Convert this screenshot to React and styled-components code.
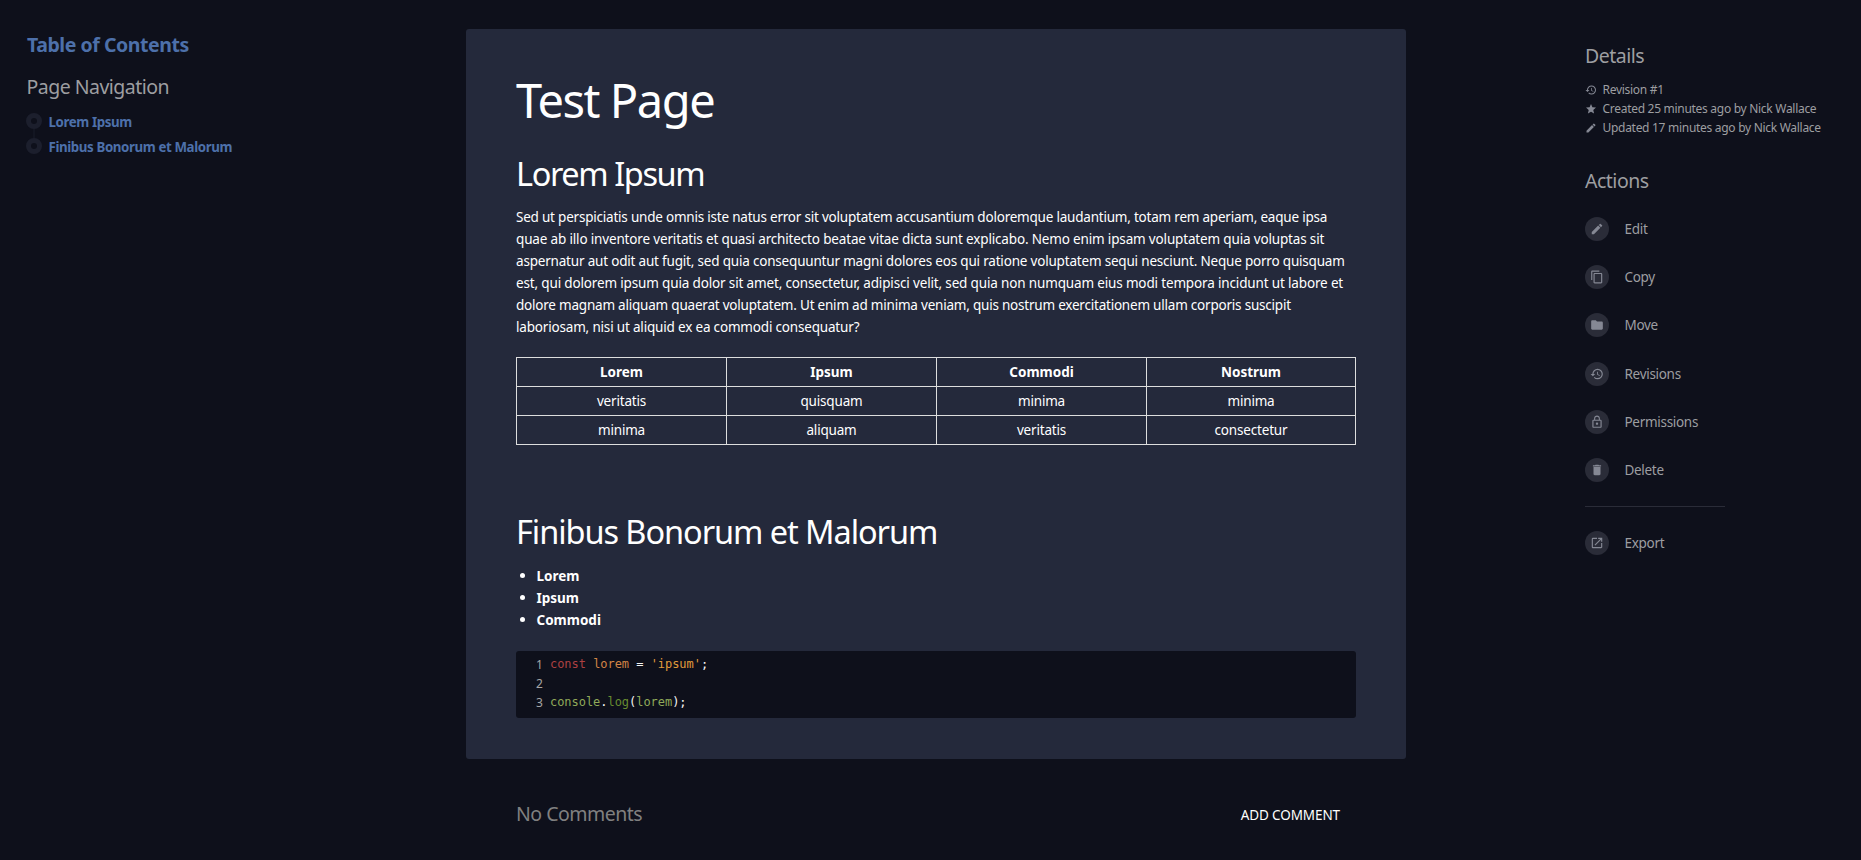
import React from "react";
import styled, { createGlobalStyle, css } from "styled-components";

const colors = {
  page: "#0e101b",
  card: "#24293b",
  text: "#ffffff",
  muted: "#9d9ea1",
  faint: "#808080",
  link: "#4d70aa",
  chip: "#2a2c38",
  icon: "#858894",
  marker: "#1c1f2d",
  border: "#dddddd",
};

const GlobalStyle = createGlobalStyle`
  *, *::before, *::after { box-sizing: border-box; }
  body {
    margin: 0;
    background: ${colors.page};
    color: ${colors.text};
    font-family: "Noto Sans", "Open Sans", sans-serif;
    font-size: 13.5px;
  }
  h1, h2, h3, p, ul { margin: 0; padding: 0; font-weight: 400; }
  ul { list-style: none; }
`;

const Page = styled.div`
  display: grid;
  grid-template-columns: 466px 940px 1fr;
  height: 860px;
  overflow: hidden;
`;

const panelHeading = css`
  font-size: 19.5px;
  line-height: 27px;
  white-space: nowrap;
`;

/* Left column */

const Sidebar = styled.aside`
  padding: 31px 0 0 26px;
`;

const TocHeading = styled.h2`
  ${panelHeading}
  padding-left: 1px;
  color: ${colors.link};
  font-weight: 700;
  letter-spacing: -0.45px;
`;

const NavHeading = styled.h3`
  ${panelHeading}
  margin-top: 15px;
  padding-left: 0.5px;
  color: ${colors.muted};
  letter-spacing: -0.52px;
`;

const NavList = styled.ul`
  display: flex;
  flex-direction: column;
  gap: 1px;
  margin-top: 10px;
`;

const NavItem = styled.li`
  display: flex;
  gap: 6.5px;
  line-height: 24px;
`;

const NavMarker = styled.span`
  position: relative;
  width: 16px;
  height: 16px;
  margin-top: 3px;
  border: 5px solid ${colors.marker};
  border-radius: 50%;

  ${NavItem}:not(:last-child) &::after {
    content: "";
    position: absolute;
    top: 11px;
    left: 2px;
    width: 2px;
    height: 9px;
    background: #131622;
  }
`;

const NavLink = styled.a`
  color: ${colors.link};
  font-size: 13.3px;
  font-weight: 700;
  letter-spacing: -0.39px;
  white-space: nowrap;
`;

/* Centre column */

const Main = styled.main`
  padding-top: 29px;
`;

const Card = styled.article`
  height: 730px;
  padding: 39px 50px 41px;
  border-radius: 3px;
  background: ${colors.card};
`;

const Title = styled.h1`
  font-size: 47px;
  line-height: 64px;
  letter-spacing: -1.45px;
`;

const SectionHeading = styled.h2`
  margin-top: ${(p) => p.$above}px;
  font-size: 32.5px;
  line-height: 45px;
  letter-spacing: ${(p) => p.$track}px;
`;

const Paragraph = styled.p`
  margin-top: 10px;
  line-height: 22px;
`;

const Line = styled.span`
  display: block;
  white-space: nowrap;
  letter-spacing: ${(p) => p.$track}px;
`;

const Table = styled.table`
  width: 840px;
  margin-top: 19px;
  border-collapse: collapse;
  table-layout: fixed;
  text-align: center;
`;

const Cell = styled.td`
  height: 29px;
  padding: 0;
  border: 1px solid ${colors.border};
  line-height: 28px;
  letter-spacing: -0.18px;

  &:nth-child(-n + 3) {
    width: 210px;
  }
`;

const HeadCell = styled(Cell).attrs({ as: "th" })`
  font-weight: 700;
  letter-spacing: 0;
`;

const BulletList = styled.ul`
  margin-top: 11px;
`;

const Bullet = styled.li`
  display: flex;
  align-items: center;
  gap: 11.5px;
  padding-left: 4px;
  font-weight: 700;
  line-height: 22px;

  &::before {
    content: "";
    width: 5px;
    height: 5px;
    margin-bottom: 1px;
    border-radius: 50%;
    background: ${colors.text};
  }
`;

const CodeBlock = styled.div`
  height: 67px;
  margin-top: 20px;
  padding: 4px 0 0 20px;
  border-radius: 3px;
  background: ${colors.page};
`;

const CodeRow = styled.div`
  display: flex;
  height: 19px;
  line-height: 19px;
`;

const LineNumber = styled.span`
  width: 14px;
  color: #a6a6a6;
  font-size: 12px;
`;

const Code = styled.code`
  font-family: "DejaVu Sans Mono", "Liberation Mono", monospace;
  font-size: 12px;
  letter-spacing: -0.04px;
  white-space: pre;
`;

const tokenColors = {
  keyword: "#ac4142",
  def: "#d28445",
  string: "#e09c3c",
  variable: "#90a959",
  property: "#678c30",
  plain: "#f5f5f5",
};

const Token = styled.span`
  color: ${(p) => tokenColors[p.$kind]};
`;

const Comments = styled.section`
  display: flex;
  justify-content: space-between;
  align-items: flex-start;
  padding: 41px 66px 0 50px;
`;

const CommentsHeading = styled.h3`
  ${panelHeading}
  color: ${colors.faint};
  letter-spacing: -0.5px;
`;

const TextButton = styled.button`
  margin: 2px 0 0;
  padding: 0;
  border: 0;
  background: none;
  color: ${colors.text};
  font: inherit;
  line-height: 26px;
  letter-spacing: -0.1px;
  text-transform: uppercase;
`;

/* Right column */

const Meta = styled.aside`
  padding: 42px 0 0 179px;
`;

const MetaHeading = styled.h3`
  ${panelHeading}
  color: ${colors.muted};
  letter-spacing: -0.5px;
`;

const DetailList = styled.ul`
  margin: 11px 0 30px;
`;

const Detail = styled.li`
  display: flex;
  align-items: center;
  gap: 5.5px;
  color: ${colors.muted};
  font-size: 12px;
  line-height: 19px;
  letter-spacing: -0.29px;
  white-space: nowrap;
`;

const ActionList = styled.div`
  display: flex;
  flex-direction: column;
  gap: 24.2px;
  margin-top: 23px;
`;

const Action = styled.a`
  display: flex;
  gap: 15.5px;
  color: ${colors.muted};
  line-height: 24px;
  letter-spacing: -0.3px;
`;

const Chip = styled.span`
  display: flex;
  align-items: center;
  justify-content: center;
  width: 24px;
  height: 24px;
  border-radius: 50%;
  background: ${colors.chip};
`;

const Divider = styled.hr`
  width: 140px;
  height: 1px;
  margin: 0;
  border: 0;
  background: ${colors.chip};
`;

const Svg = styled.svg`
  display: block;
  flex: none;
  width: ${(p) => p.$size}px;
  height: ${(p) => p.$size}px;
  fill: ${colors.icon};
`;

const iconPaths = {
  history:
    "M13 3a9 9 0 0 0-9 9H1l3.89 3.89.07.14L9 12H6c0-3.87 3.13-7 7-7s7 3.13 7 7-3.13 7-7 7c-1.93 0-3.68-.79-4.94-2.06l-1.42 1.42A8.95 8.95 0 0 0 13 21a9 9 0 0 0 0-18zm-1 5v5l4.28 2.54.72-1.21-3.5-2.08V8z",
  star: "M12 17.27L18.18 21l-1.64-7.03L22 9.24l-7.19-.61L12 2 9.19 8.63 2 9.24l5.46 4.73L5.82 21z",
  edit: "M3 17.25V21h3.75L17.81 9.94l-3.75-3.75L3 17.25zM20.71 7.04a1 1 0 0 0 0-1.41l-2.34-2.34a1 1 0 0 0-1.41 0l-1.83 1.83 3.75 3.75 1.83-1.83z",
  copy: "M16 1H4c-1.1 0-2 .9-2 2v14h2V3h12V1zm3 4H8c-1.1 0-2 .9-2 2v14c0 1.1.9 2 2 2h11c1.1 0 2-.9 2-2V7c0-1.1-.9-2-2-2zm0 16H8V7h11v14z",
  folder: "M10 4H4c-1.1 0-1.99.9-1.99 2L2 18c0 1.1.9 2 2 2h16c1.1 0 2-.9 2-2V8c0-1.1-.9-2-2-2h-8l-2-2z",
  lock: "M12 17c1.1 0 2-.9 2-2s-.9-2-2-2-2 .9-2 2 .9 2 2 2zm6-9h-1V6c0-2.76-2.24-5-5-5S7 3.24 7 6v2H6c-1.1 0-2 .9-2 2v10c0 1.1.9 2 2 2h12c1.1 0 2-.9 2-2V10c0-1.1-.9-2-2-2zM8.9 6c0-1.71 1.39-3.1 3.1-3.1s3.1 1.39 3.1 3.1v2H8.9V6zM18 20H6V10h12v10z",
  trash: "M6 19c0 1.1.9 2 2 2h8c1.1 0 2-.9 2-2V7H6v12zM19 4h-3.5l-1-1h-5l-1 1H5v2h14V4z",
  export:
    "M19 19H5V5h7V3H5a2 2 0 0 0-2 2v14a2 2 0 0 0 2 2h14c1.1 0 2-.9 2-2v-7h-2v7zM14 3v2h3.59l-9.83 9.83 1.41 1.41L19 6.41V10h2V3h-7z",
};

function Icon({ name, size }) {
  return (
    <Svg viewBox="0 0 24 24" $size={size} aria-hidden="true">
      <path d={iconPaths[name]} />
    </Svg>
  );
}

const paragraph = [
  ["Sed ut perspiciatis unde omnis iste natus error sit voluptatem accusantium doloremque laudantium, totam rem aperiam, eaque ipsa", -0.213],
  ["quae ab illo inventore veritatis et quasi architecto beatae vitae dicta sunt explicabo. Nemo enim ipsam voluptatem quia voluptas sit", -0.16],
  ["aspernatur aut odit aut fugit, sed quia consequuntur magni dolores eos qui ratione voluptatem sequi nesciunt. Neque porro quisquam", -0.191],
  ["est, qui dolorem ipsum quia dolor sit amet, consectetur, adipisci velit, sed quia non numquam eius modi tempora incidunt ut labore et", -0.153],
  ["dolore magnam aliquam quaerat voluptatem. Ut enim ad minima veniam, quis nostrum exercitationem ullam corporis suscipit", -0.213],
  ["laboriosam, nisi ut aliquid ex ea commodi consequatur?", -0.18],
];

const columns = ["Lorem", "Ipsum", "Commodi", "Nostrum"];
const rows = [
  ["veritatis", "quisquam", "minima", "minima"],
  ["minima", "aliquam", "veritatis", "consectetur"],
];

const code = [
  [["keyword", "const"], ["plain", " "], ["def", "lorem"], ["plain", " = "], ["string", "'ipsum'"], ["plain", ";"]],
  [],
  [["variable", "console"], ["plain", "."], ["property", "log"], ["plain", "("], ["variable", "lorem"], ["plain", ");"]],
];

const details = [
  ["history", "Revision #1"],
  ["star", "Created 25 minutes ago by Nick Wallace"],
  ["edit", "Updated 17 minutes ago by Nick Wallace"],
];

const actions = [
  ["edit", "Edit"],
  ["copy", "Copy"],
  ["folder", "Move"],
  ["history", "Revisions"],
  ["lock", "Permissions"],
  ["trash", "Delete"],
];

function ActionLink({ icon, label }) {
  return (
    <Action>
      <Chip>
        <Icon name={icon} size={14} />
      </Chip>
      {label}
    </Action>
  );
}

export default function App() {
  return (
    <Page>
      <GlobalStyle />
      <Sidebar>
        <TocHeading>Table of Contents</TocHeading>
        <NavHeading>Page Navigation</NavHeading>
        <NavList>
          {["Lorem Ipsum", "Finibus Bonorum et Malorum"].map((label) => (
            <NavItem key={label}>
              <NavMarker />
              <NavLink>{label}</NavLink>
            </NavItem>
          ))}
        </NavList>
      </Sidebar>

      <Main>
        <Card>
          <Title>Test Page</Title>
          <SectionHeading $above={19} $track={-1.4}>Lorem Ipsum</SectionHeading>
          <Paragraph>
            {paragraph.map(([text, track]) => (
              <Line key={text} $track={track}>{text} </Line>
            ))}
          </Paragraph>
          <Table>
            <thead>
              <tr>{columns.map((c) => <HeadCell key={c}>{c}</HeadCell>)}</tr>
            </thead>
            <tbody>
              {rows.map((row, r) => (
                <tr key={r}>{row.map((c, i) => <Cell key={i}>{c}</Cell>)}</tr>
              ))}
            </tbody>
          </Table>
          <SectionHeading $above={64} $track={-1.06}>Finibus Bonorum et Malorum</SectionHeading>
          <BulletList>
            {["Lorem", "Ipsum", "Commodi"].map((b) => <Bullet key={b}>{b}</Bullet>)}
          </BulletList>
          <CodeBlock>
            {code.map((tokens, i) => (
              <CodeRow key={i}>
                <LineNumber>{i + 1}</LineNumber>
                <Code>
                  {tokens.map(([kind, text], t) => <Token key={t} $kind={kind}>{text}</Token>)}
                </Code>
              </CodeRow>
            ))}
          </CodeBlock>
        </Card>
        <Comments>
          <CommentsHeading>No Comments</CommentsHeading>
          <TextButton>Add Comment</TextButton>
        </Comments>
      </Main>

      <Meta>
        <MetaHeading>Details</MetaHeading>
        <DetailList>
          {details.map(([icon, text]) => (
            <Detail key={text}>
              <Icon name={icon} size={12} />
              {text}
            </Detail>
          ))}
        </DetailList>
        <MetaHeading>Actions</MetaHeading>
        <ActionList>
          {actions.map(([icon, label]) => (
            <ActionLink key={label} icon={icon} label={label} />
          ))}
          <Divider />
          <ActionLink icon="export" label="Export" />
        </ActionList>
      </Meta>
    </Page>
  );
}
